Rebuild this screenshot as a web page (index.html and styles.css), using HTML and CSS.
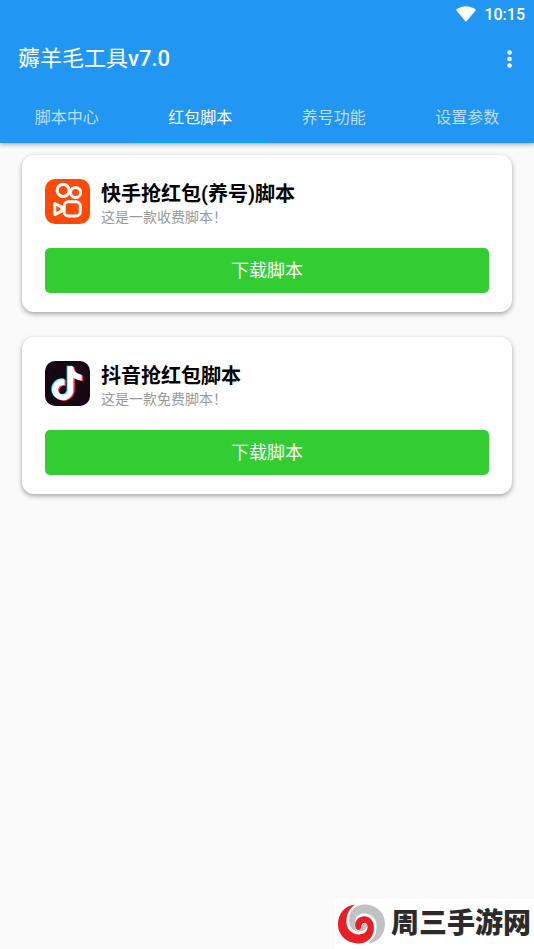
FILE: index.html
```html
<!DOCTYPE html>
<html lang="zh-CN">
<head>
<meta charset="utf-8">
<meta name="viewport" content="width=device-width, initial-scale=1">
<title>薅羊毛工具v7.0</title>
<link rel="stylesheet" href="styles.css">
</head>
<body>
<header class="app-header">
  <div class="status-bar">
    <svg class="wifi" viewBox="0 0 20 16" aria-hidden="true"><path d="M10 16 L0 4 C6 -1 14 -1 20 4 Z"/></svg>
    <time>10:15</time>
  </div>
  <div class="toolbar">
    <h1>薅羊毛工具<span class="version">v7.0</span></h1>
    <button class="menu" type="button" aria-label="更多">
      <svg viewBox="0 0 6 18" aria-hidden="true"><circle cx="3" cy="2.5" r="2.3"/><circle cx="3" cy="9" r="2.3"/><circle cx="3" cy="15.5" r="2.3"/></svg>
    </button>
  </div>
  <nav class="tabs">
    <a href="#center">脚本中心</a>
    <a href="#redpacket" class="active" aria-current="page">红包脚本</a>
    <a href="#account">养号功能</a>
    <a href="#settings">设置参数</a>
  </nav>
</header>
<main class="scripts">
  <article class="card">
    <div class="info">
      <svg class="icon" viewBox="0 0 134 134" aria-hidden="true">
        <rect width="134" height="134" rx="30" fill="#ff4906"/>
        <g fill="none" stroke="#fff" stroke-width="9" stroke-linejoin="round">
          <circle cx="54" cy="34" r="18"/>
          <circle cx="91" cy="40" r="15"/>
          <rect x="57" y="68" width="48" height="42" rx="12"/>
          <path d="M29 73 V106 L50 95 V84 Z"/>
        </g>
      </svg>
      <div class="text">
        <h2>快手抢红包(养号)脚本</h2>
        <p>这是一款收费脚本！</p>
      </div>
    </div>
    <button class="download" type="button">下载脚本</button>
  </article>
  <article class="card">
    <div class="info">
      <svg class="icon" viewBox="0 0 134 134" aria-hidden="true">
        <defs>
          <path id="note" d="M12.525.02c1.31-.02 2.61-.01 3.91-.02.08 1.53.63 3.09 1.75 4.17 1.12 1.11 2.7 1.62 4.24 1.79v4.03c-1.44-.05-2.89-.35-4.2-.97-.57-.26-1.1-.59-1.62-.93-.01 2.92.01 5.84-.02 8.75-.08 1.4-.54 2.79-1.35 3.94-1.31 1.92-3.58 3.17-5.91 3.21-1.43.08-2.86-.31-4.08-1.03-2.02-1.19-3.44-3.37-3.65-5.71-.02-.5-.03-1-.01-1.49.18-1.9 1.12-3.72 2.58-4.96 1.66-1.44 3.98-2.13 6.15-1.72.02 1.48-.04 2.96-.04 4.44-.99-.32-2.15-.23-3.02.37-.63.41-1.11 1.04-1.36 1.75-.21.51-.15 1.07-.14 1.61.24 1.64 1.82 3.02 3.5 2.87 1.12-.01 2.19-.66 2.77-1.61.19-.33.4-.67.41-1.06.1-1.79.06-3.57.07-5.36.01-4.03-.01-8.05.02-12.07z"/>
        </defs>
        <rect width="134" height="134" rx="30" fill="#170613"/>
        <use href="#note" fill="#25f4ee" transform="translate(12 14) scale(4.2)"/>
        <use href="#note" fill="#fe2c55" transform="translate(19 18) scale(4.2)"/>
        <use href="#note" fill="#fff" transform="translate(15 16) scale(4.2)"/>
      </svg>
      <div class="text">
        <h2>抖音抢红包脚本</h2>
        <p>这是一款免费脚本！</p>
      </div>
    </div>
    <button class="download" type="button">下载脚本</button>
  </article>
</main>
<aside class="brand">
  <svg viewBox="25 25 140 118" aria-hidden="true">
    <defs>
      <path id="swirl" d="M76 27 C45 28 25 55 25 85 C25 118 52 142 86 142 C114 142 132 122 132 96 C132 76 121 61 104 61 C88 61 76 73 76 87 C76 97 80 102 86 102 C92 102 93 97 94 92 C95 84 99 80 104 80 C110 80 113 86 113 94 C113 106 102 115 88 115 C65 115 50 99 50 78 C50 56 58 38 76 27 Z"/>
    </defs>
    <use href="#swirl" fill="#bfc1c3" transform="rotate(180 95 84)"/>
    <use href="#swirl" fill="#e81e25" stroke="#fff" stroke-width="3" paint-order="stroke"/>
  </svg>
  <span>周三手游网</span>
</aside>
</body>
</html>
```
FILE: styles.css
```css
* {
  box-sizing: border-box;
}

body {
  margin: 0;
  min-height: 100vh;
  background: #fafafa;
  color: #000;
  font-family: Roboto, "Noto Sans CJK SC", sans-serif;
}

h1,
h2,
p {
  margin: 0;
}

button {
  border: 0;
  padding: 0;
  font: inherit;
  color: #fff;
  cursor: pointer;
}

.app-header {
  background: #2196f3;
  color: #fff;
  box-shadow: 0 1px 5px rgba(0, 0, 0, 0.4);
}

.status-bar {
  display: flex;
  justify-content: flex-end;
  align-items: center;
  gap: 8px;
  height: 28px;
  padding: 0 9px;
  font-size: 16px;
  font-weight: 500;
}

.wifi {
  width: 20px;
  height: 16px;
  fill: #fff;
}

.toolbar {
  display: flex;
  justify-content: space-between;
  align-items: center;
  height: 62px;
  padding: 0 18px;
}

.toolbar h1 {
  font-size: 22px;
  font-weight: 400;
  line-height: 24px;
}

.toolbar .version {
  font-weight: 500;
}

.menu {
  display: flex;
  justify-content: flex-end;
  background: none;
}

.menu svg {
  width: 13px;
  height: 18px;
  fill: #fff;
}

.tabs {
  display: grid;
  grid-template-columns: repeat(4, 1fr);
  height: 53px;
}

.tabs a {
  display: flex;
  justify-content: center;
  align-items: center;
  border-bottom: 1px solid transparent;
  color: rgba(255, 255, 255, 0.7);
  font-size: 16px;
  text-decoration: none;
}

.tabs .active {
  border-color: #03a9f4;
  color: #fff;
}

.scripts {
  display: grid;
  gap: 25px;
  padding: 12px 22px;
}

.card {
  display: grid;
  gap: 24px;
  padding: 23px 23px 19px;
  border-radius: 12px;
  background: #fff;
  box-shadow: 0 2px 5px rgba(0, 0, 0, 0.35);
}

.info {
  display: flex;
  align-items: center;
  gap: 11px;
}

.icon {
  width: 45px;
  height: 45px;
}

.text h2 {
  font-size: 20px;
  font-weight: 700;
  line-height: 32px;
}

.text p {
  color: #999;
  font-size: 14px;
  line-height: 14px;
}

.download {
  height: 45px;
  border-radius: 5px;
  background: #32cd32;
  font-size: 18px;
  line-height: 26px;
}

.brand {
  position: fixed;
  right: 0;
  bottom: 0;
  display: flex;
  align-items: center;
  gap: 6px;
  height: 50px;
  padding: 0 3px 0 4px;
  background: #fff;
  color: #2b2b2b;
  font-size: 28px;
  font-weight: 900;
  line-height: 36px;
}

.brand svg {
  width: 47px;
  height: 40px;
}
```
